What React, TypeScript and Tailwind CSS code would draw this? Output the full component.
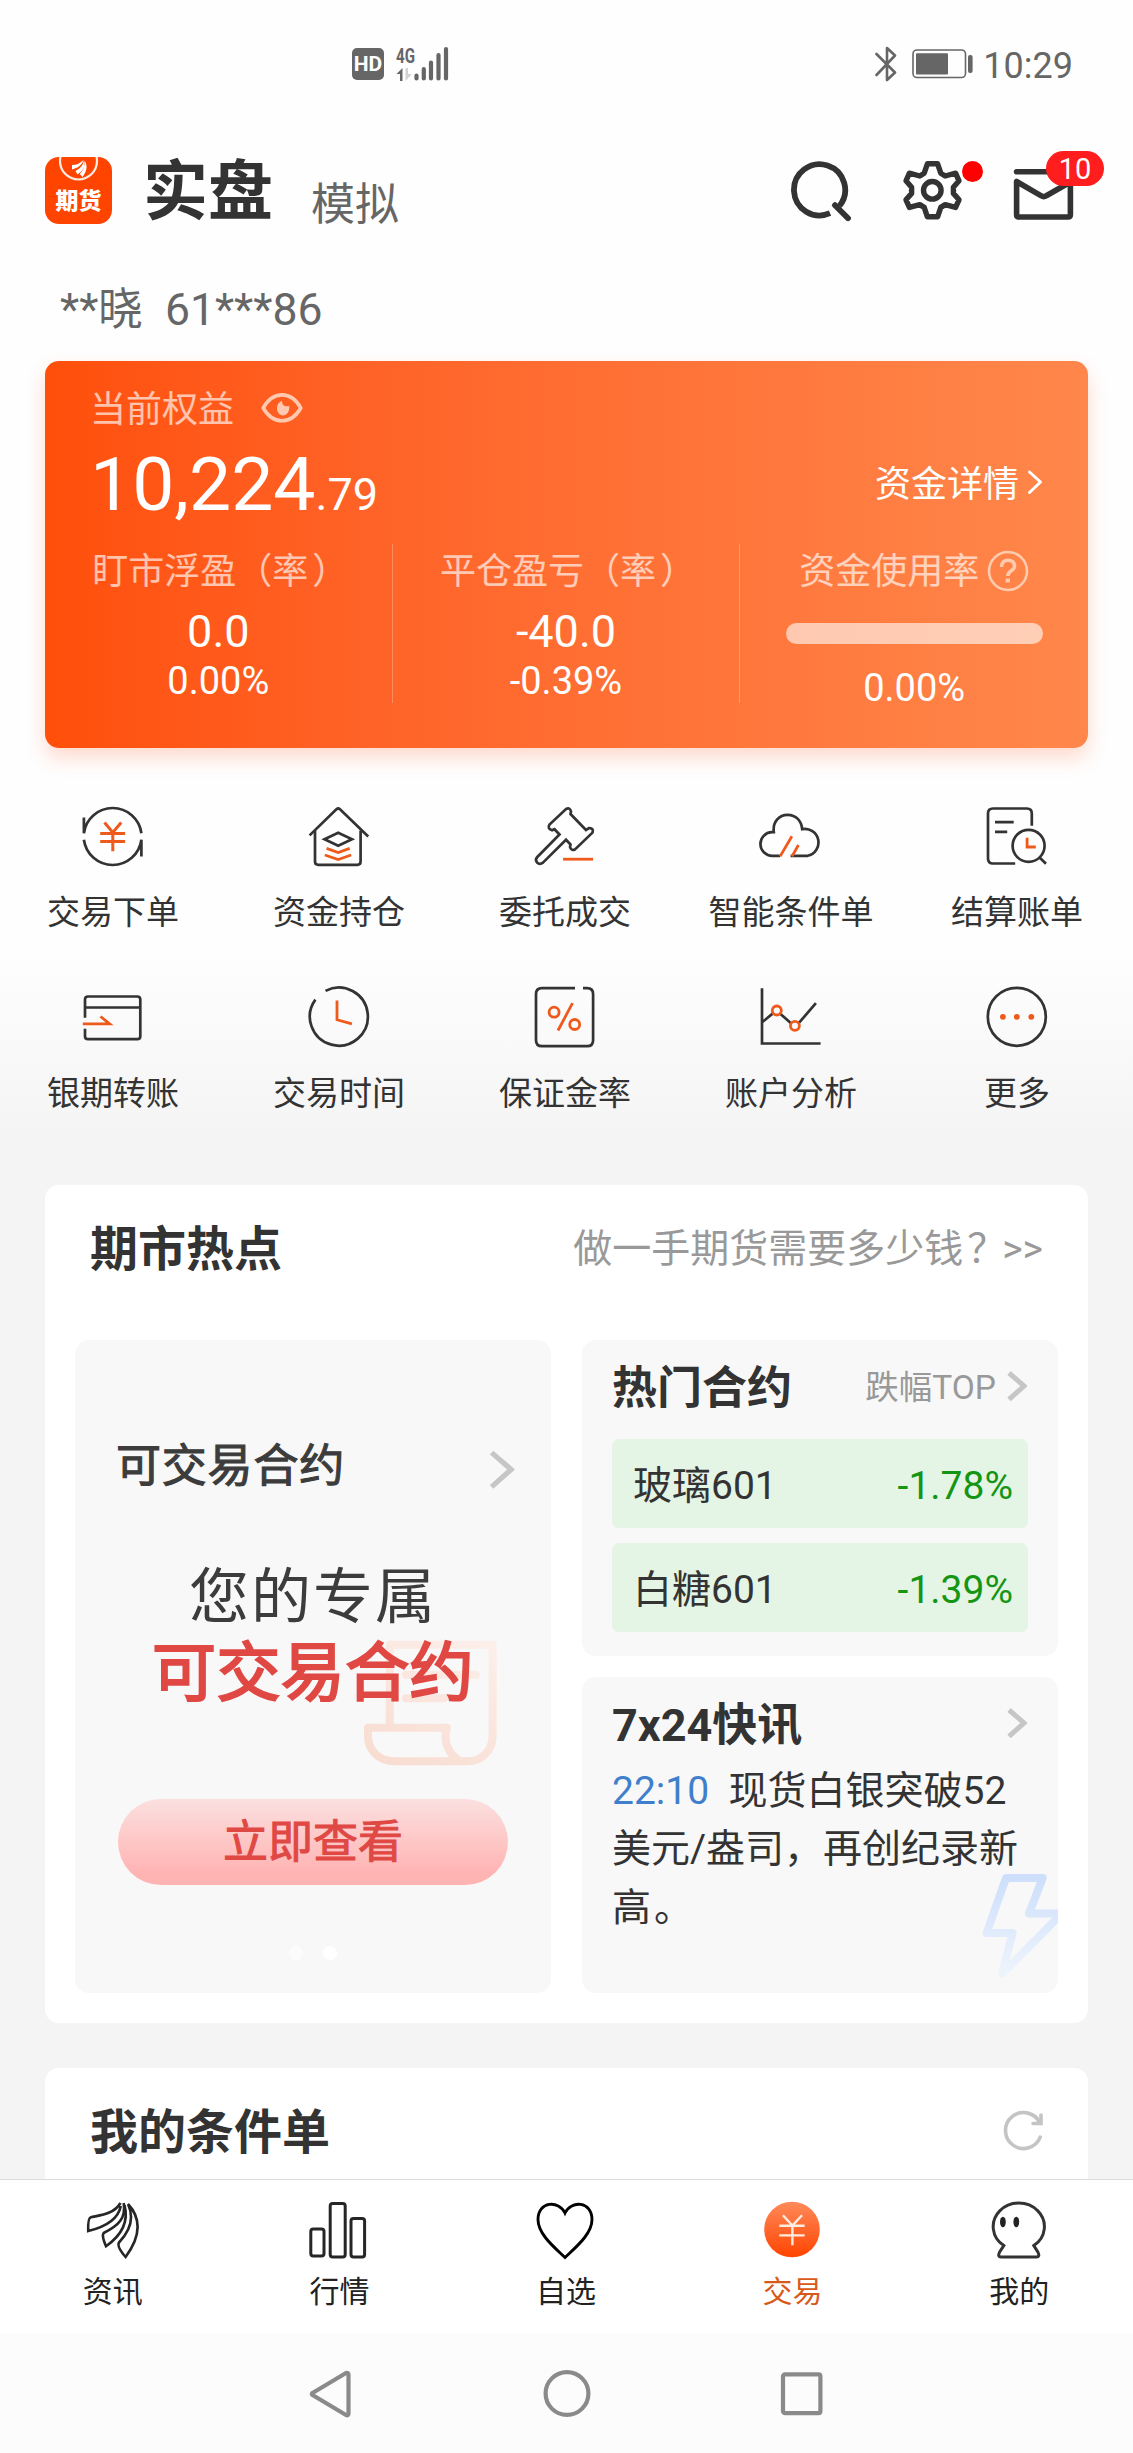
import React from "react";

const DARK = "#333333";
const ORANGE = "#ee5a1c";

/* ---------- status bar ---------- */

function SignalIcon() {
  return (
    <svg className="-mt-[6px] h-[42px] w-[54px]" viewBox="0 -6 54 42">
      <text x="0" y="16.5" fontFamily="Roboto" fontWeight="700" fontSize="20.5" fill="#666" textLength="19" lengthAdjust="spacingAndGlyphs">4G</text>
      <path d="M0.5 28 L6.5 22 V35 H4 V28Z" fill="#666" />
      <path d="M9.5 22 V35 L16 28 H12 V22Z" fill="#d2d2d2" />
      <g stroke="#666" strokeWidth="4.2" strokeLinecap="round">
        <path d="M20.5 29.5V32.5M27.8 23V32.5M35 16.5V32.5M42.5 9V32.5M50 3V32.5" />
      </g>
    </svg>
  );
}

function StatusBar() {
  return (
    <div className="flex h-[128px] shrink-0 items-center pl-[352px] pr-[60px]">
      <div className="flex h-[32px] w-[32px] items-center justify-center rounded-[5px] bg-[#666] text-[21px] font-bold leading-none text-white">
        HD
      </div>
      <div className="ml-[12px]">
        <SignalIcon />
      </div>
      <div className="ml-auto flex items-center">
        <svg className="h-[36px] w-[22px]" viewBox="0 0 22 36" fill="none" stroke="#666" strokeWidth="2.6" strokeLinejoin="round" strokeLinecap="round">
          <path d="M1.5 8 L20 26.5 L12 34 V2 L20 9.5 L1.5 29" />
        </svg>
        <svg className="ml-[15px] h-[30px] w-[62px]" viewBox="0 0 62 30">
          <rect x="1" y="1" width="52.5" height="27.5" rx="4" fill="none" stroke="#666" strokeWidth="1.6" />
          <rect x="4" y="4.2" width="32" height="21.3" rx="1" fill="#666" />
          <rect x="56" y="6" width="4.6" height="18" rx="2" fill="#666" />
        </svg>
        <div className="ml-[9px] mt-[3px] text-[36px] leading-[44px] text-[#666]">10:29</div>
      </div>
    </div>
  );
}

/* ---------- header ---------- */

function Logo() {
  return (
    <div className="relative flex h-[67px] w-[67px] shrink-0 justify-center overflow-hidden rounded-[14px] bg-[#ff4400]">
      <svg className="absolute left-0 top-0 h-[67px] w-[67px]" viewBox="0 0 67 67">
        <circle cx="33.5" cy="4" r="18.5" fill="none" stroke="#ffece3" strokeWidth="2.2" />
        <g fill="#fff">
          <path d="M27 8 C32 8 35 6 38.5 3 C37 8 33 11 27 12.5Z" />
          <path d="M30.5 14 C36 11 38 8 39 3.5 C41 9 38 14 32.5 17.5Z" />
          <path d="M34.8 17 C38.5 13 40 9 39.8 4 C43 9 41.5 15 37.5 20Z" />
        </g>
      </svg>
      <div className="mt-[31px] text-[23px] font-black leading-[28px] text-white">期货</div>
    </div>
  );
}

function Header() {
  return (
    <div className="flex h-[124px] shrink-0 items-center pl-[45px] pr-[29px]">
      <Logo />
      <div className="ml-[31px] mt-[4px] text-[65px] font-bold leading-[80px] text-[#333]">实盘</div>
      <div className="ml-[38px] mt-[30px] text-[44px] leading-[54px] text-[#666]">模拟</div>
      <svg className="ml-auto h-[64px] w-[64px]" viewBox="0 0 64 64" fill="none" stroke={DARK} strokeWidth="5.8" strokeLinecap="butt">
        <path d="M43 55.2 A25.6 25.6 0 1 1 52.4 48" />
        <path d="M48 47.2 L61 60.2" strokeLinecap="round" />
      </svg>
      <div className="relative ml-[50px] h-[64px] w-[62px]">
        <svg className="h-[64px] w-[62px]" viewBox="0 0 62 64" fill="none" stroke={DARK} strokeWidth="5.4" strokeLinejoin="round">
          <path d="M26.4 5.8 H36.6 L39.8 15.2 L44.2 18 L54.6 15.2 L58 22.8 L52.4 29.2 V35.4 L58 41.8 L54.6 49.4 L44.2 46.6 L39.8 49.4 L36.6 58.8 H26.4 L23.2 49.4 L18.8 46.6 L8.4 49.4 L5 41.8 L10.6 35.4 V29.2 L5 22.8 L8.4 15.2 L18.8 18 L23.2 15.2 Z" />
          <circle cx="31.3" cy="32.3" r="8.8" />
        </svg>
        <div className="absolute left-[61px] top-[3px] h-[21px] w-[21px] rounded-full bg-[#ff0000]" />
      </div>
      <div className="relative ml-[49px] h-[64px] w-[92px]">
        <svg className="h-[64px] w-[66px]" viewBox="0 0 66 64" fill="none" stroke={DARK} strokeWidth="5.6" strokeLinejoin="round" strokeLinecap="round">
          <path d="M4.6 13.8 H58" />
          <path d="M4.6 23.5 V56.5 Q4.6 59 7 59 H56 Q58.4 59 58.4 56.5 V24 L34.3 37.8 Q31.8 39.6 29.3 37.8 Z" />
        </svg>
        <div className="absolute left-[34px] top-[-7px] flex h-[35px] w-[58px] items-center justify-center rounded-full bg-[#ff1d1d] pt-px text-[29px] leading-none text-white">
          10
        </div>
      </div>
    </div>
  );
}

/* ---------- equity card ---------- */

function EquityCard() {
  return (
    <div className="mx-[45px] flex h-[387px] shrink-0 flex-col rounded-[14px] bg-linear-to-r from-[#ff4f09] to-[#ff874b] text-white shadow-[0_10px_20px_rgba(255,90,30,0.22)]">
      <div className="flex h-[44px] items-center pl-[45px] mt-[27px]">
        <div className="text-[36px] leading-[44px] text-white/65">当前权益</div>
        <svg className="ml-[26px] h-[32px] w-[44px] -mt-[4px]" viewBox="0 0 44 32">
          <path d="M3.2 16 C13 -1.5 31 -1.5 40.8 16 C31 33 13 33 3.2 16Z" fill="none" stroke="#ffc9b0" strokeWidth="3.6" strokeLinejoin="round" />
          <path d="M22 9 C22 13.5 25 15 29.3 14 C29.6 20 26.5 23.5 23 23.5 C15.5 23 15 11 22 9Z" fill="#ffc9b0" />
        </svg>
      </div>
      <div className="flex h-[94px] items-center justify-between pl-[45px] pr-[45px]">
        <div className="mt-[21px] flex items-baseline leading-[90px]">
          <span className="text-[75px]">10,224</span>
          <span className="text-[45px]">.79</span>
        </div>
        <div className="mt-[11px] flex items-center">
          <span className="text-[36px] leading-[44px]">资金详情</span>
          <svg className="ml-[8px] h-[26px] w-[16px] -mt-[5px]" viewBox="0 0 16 26" fill="none" stroke="#fff" strokeWidth="3" strokeLinecap="round" strokeLinejoin="round">
            <path d="M2.5 3 L13.5 13 L2.5 23.5" />
          </svg>
        </div>
      </div>
      <div className="mt-[18px] grid h-[159px] grid-cols-3 grid-rows-[159px] text-center">
        <Metric label="盯市浮盈" value="0.0" rate="0.00%" />
        <Metric label="平仓盈亏" value="-40.0" rate="-0.39%" />
        <div className="flex flex-col items-center">
          <div className="mt-[6px] flex items-center">
            <span className="text-[36px] leading-[44px] text-white/65">资金使用率</span>
            <svg className="ml-[8px] h-[42px] w-[42px] -mt-[3px]" viewBox="0 0 42 42" fill="none" stroke="#ffcbaf">
              <circle cx="21" cy="21" r="19" strokeWidth="2.6" />
              <path d="M14.5 17 C14 8 28 8 27.5 16.5 C27.3 21 21 20 20.8 26" strokeWidth="3.6" />
              <path d="M20.8 28.6 V32.4" strokeWidth="4.4" />
            </svg>
          </div>
          <div className="mt-[29px] h-[21px] w-[257px] shrink-0 rounded-full bg-white/60" />
          <div className="mt-[21px] text-[38px] leading-[46px]">0.00%</div>
        </div>
      </div>
    </div>
  );
}

function Metric({ label, value, rate }: { label: string; value: string; rate: string }) {
  return (
    <div className="flex flex-col items-center border-r border-white/25">
      <div className="mt-[6px] flex whitespace-nowrap text-[36px] leading-[44px] text-white/65">
        <span>{label}（率</span>
        <span className="-mr-[4px] pl-[4px]">）</span>
      </div>
      <div className="mt-[11px] text-[45px] leading-[54px]">{value}</div>
      <div className="-mt-[1px] text-[38px] leading-[46px]">{rate}</div>
    </div>
  );
}

/* ---------- shortcuts ---------- */

const O = ({ d, w = 2.8 }: { d: string; w?: number }) => <path d={d} stroke={ORANGE} strokeWidth={w} />;

const shortcuts: { label: string; icon: React.ReactNode }[] = [
  {
    label: "交易下单",
    icon: (
      <>
        <path d="M10.9 21.5 V37.2 A29 29 0 0 1 68.4 37.2" />
        <path d="M10.9 43.8 A29 29 0 0 0 68.4 43.8 V60.5" />
        <O d="M31.5 26.5 L39.8 36.5 L48.2 26.5 M39.8 36.5 V55.2 M27.2 37.4 H52.1 M27.2 45.6 H52.1" w={3} />
      </>
    ),
  },
  {
    label: "资金持仓",
    icon: (
      <>
        <path d="M10.6 39.4 L37.4 13.2 Q39.2 11.8 41 13.2 L69.2 40.5" />
        <path d="M16 34.5 V65.5 Q16 68.8 19.3 68.8 H58.3 Q61.6 68.8 61.6 65.5 V34.5" />
        <path d="M25.5 43.2 L39.2 36.8 L53 43.2 L39.2 49.8Z" />
        <O d="M27.6 52.4 L39.2 56.6 L50.7 52.4 M25.8 59 L39.2 63.6 L52.2 59" />
      </>
    ),
  },
  {
    label: "委托成交",
    icon: (
      <>
        <path d="M34.5 38.5 L29.5 33.2 L27 34.3 Q22 32.5 24.5 28.5 L41 13 Q45 11 46 15.5 L45.5 18 L61 34 L64 32.2 Q69 32 67.5 36.6 L50 53.4 Q46 55 45 51 L45.5 48.5 L41 43.8 L18 66.6 Q14.8 69 12 66.5 Q9.8 63.6 12.3 61Z" />
        <O d="M38.1 63.2 H68.1" />
      </>
    ),
  },
  {
    label: "智能条件单",
    icon: (
      <>
        <path d="M29 59.8 H21.5 A11.8 11.8 0 0 1 21 36.2 L22.8 36.2 C21.5 26 28 18.8 36.7 18.8 C45 18.8 50.5 25 51.2 33.2 A13.4 13.4 0 1 1 56.6 59.8 H39.6" />
        <O d="M29.1 60.4 L40.9 40.2 M41 60.4 L47.5 49" />
      </>
    ),
  },
  {
    label: "结算账单",
    icon: (
      <>
        <path d="M54.8 29.8 V17.5 Q54.8 12.5 49.8 12.5 H16 Q11 12.5 11 17.5 V62.5 Q11 67.5 16 67.5 H38.2" />
        <path d="M18 26.2 H36.7 M18 35.8 H30.2 M62.8 61.8 L69 67.8" />
        <circle cx="51.6" cy="49.8" r="16" />
        <O d="M50.1 41.8 V51 H58.8" />
      </>
    ),
  },
  {
    label: "银期转账",
    icon: (
      <>
        <path d="M12 40.8 V22.5 Q12 19.5 15 19.5 H64.3 Q67.3 19.5 67.3 22.5 V59.2 Q67.3 62.2 64.3 62.2 H15 Q12 62.2 12 59.2 V51.8 M12 30.5 H67.3" />
        <O d="M9.8 46.8 H36.6 L27.5 39.5" />
      </>
    ),
  },
  {
    label: "交易时间",
    icon: (
      <>
        <path d="M26.5 13.9 A29 29 0 1 1 16.4 22.6" />
        <O d="M38 23.5 V42.8 L52.9 46.8" />
      </>
    ),
  },
  {
    label: "保证金率",
    icon: (
      <>
        <path d="M50 11.2 H17 Q11 11.2 11 17.2 V63.2 Q11 69.2 17 69.2 H62.1 Q68.1 69.2 68.1 63.2 V17.2 Q68.1 11.2 62.1 11.2 H58" />
        <O d="M33 53.5 L47.5 26.2" />
        <circle cx="29.1" cy="35.2" r="5" stroke={ORANGE} strokeWidth="2.8" />
        <circle cx="49.7" cy="47.5" r="5" stroke={ORANGE} strokeWidth="2.8" />
      </>
    ),
  },
  {
    label: "账户分析",
    icon: (
      <>
        <path d="M11 11.2 V66.5 H69.6 M11.7 44.8 L21.9 36.4 M29.5 37 L40.3 46.4 M47.5 46.4 L64.9 26.2" />
        <circle cx="25.8" cy="33.5" r="4.5" stroke={ORANGE} strokeWidth="2.8" />
        <circle cx="43.9" cy="48.8" r="4.5" stroke={ORANGE} strokeWidth="2.8" />
      </>
    ),
  },
  {
    label: "更多",
    icon: (
      <>
        <circle cx="39.8" cy="39.8" r="29" />
        <g fill={ORANGE} stroke="none">
          <circle cx="25.9" cy="39.8" r="2.9" />
          <circle cx="39.8" cy="39.8" r="2.9" />
          <circle cx="54.3" cy="39.8" r="2.9" />
        </g>
      </>
    ),
  },
];

function Shortcuts() {
  return (
    <div className="mt-[47px] grid w-[1130px] shrink-0 grid-cols-5 gap-y-[41px]">
      {shortcuts.map((s) => (
        <div key={s.label} className="flex h-[140px] flex-col items-center">
          <svg className="mt-px h-[80px] w-[80px]" viewBox="0 0 80 80" fill="none" stroke={DARK} strokeWidth="2.7">
            {s.icon}
          </svg>
          <div className="mt-[15px] text-[33px] leading-[44px] text-[#333]">{s.label}</div>
        </div>
      ))}
    </div>
  );
}

/* ---------- hot spots ---------- */

function Chevron({ className, w = 5 }: { className: string; w?: number }) {
  return (
    <svg className={className} viewBox="0 0 20 30" fill="none" stroke="#c6c6c6" strokeWidth={w}>
      <path d="M2 2 L17 15 L2 28.4" />
    </svg>
  );
}

function TradablePanel() {
  return (
    <div className="relative flex w-[476px] flex-col items-center rounded-[14px] bg-[#f8f8f8]">
      <svg className="absolute left-[285px] top-[297px] h-[132px] w-[140px]" viewBox="0 0 140 132" fill="none" stroke="url(#scroll)" strokeWidth="8" strokeLinejoin="round" strokeLinecap="round">
        <defs>
          <linearGradient id="scroll" gradientUnits="userSpaceOnUse" x1="110" y1="0" x2="40" y2="130">
            <stop offset="0" stopColor="#fceee9" />
            <stop offset="1" stopColor="#f8ddd2" />
          </linearGradient>
        </defs>
        <path d="M29.8 90 V7.7 H132.6 V99 C132.6 114 121 124.3 107 124.3 H34 C19 124.3 8 113 8 99 V90.7 H87 C84 100 85 113 97 122" />
        <path d="M46 37.7 H116 M46 61.2 H84" />
      </svg>
      <div className="relative mt-[99px] flex w-full items-center justify-between pl-[41px] pr-[36px]">
        <div className="text-[45px] leading-[56px] tracking-[0.8px] text-[#3c3c3c] [-webkit-text-stroke:1.1px_#3c3c3c]">可交易合约</div>
        <Chevron className="mt-[4px] h-[39px] w-[26px]" w={4} />
      </div>
      <div className="relative mt-[65px] text-[60px] leading-[76px] tracking-[2px] text-[#3c3c3c]">您的专属</div>
      <div className="relative text-[64px] leading-[76px] tracking-[0.4px] text-[#e04844] [-webkit-text-stroke:2.2px_#e04844]">可交易合约</div>
      <div className="mt-[87px] flex h-[86px] w-[390px] items-center justify-center rounded-full bg-linear-to-b from-[#fae0df] to-[#ffb4b4] to-85% text-[45px] leading-none text-[#e04844] [-webkit-text-stroke:1px_#e04844]">
        立即查看
      </div>
      <div className="mt-[61px] flex gap-[20px]">
        <div className="h-[14px] w-[14px] rounded-full bg-white/60" />
        <div className="h-[14px] w-[14px] rounded-full bg-white" />
      </div>
    </div>
  );
}

function ContractRow({ name, change }: { name: string; change: string }) {
  return (
    <div className="flex h-[89px] items-center justify-between rounded-[7px] bg-[#e4f4e5] pl-[21px] pr-[15px] pt-[6px] text-[39px]">
      <span className="text-[#333]">{name}</span>
      <span className="text-[#149614]">{change}</span>
    </div>
  );
}

function HotContracts() {
  return (
    <div className="flex h-[316px] flex-col rounded-[14px] bg-[#f8f8f8] px-[30px]">
      <div className="flex h-[99px] items-center">
        <div className="-mt-[2px] text-[45px] font-bold leading-[56px] text-[#333]">热门合约</div>
        <div className="-mt-[3px] ml-auto text-[33.5px] leading-[44px] text-[#999]">跌幅TOP</div>
        <Chevron className="ml-[11px] mr-[1px] mt-[-8px] h-[30px] w-[20px]" />
      </div>
      <div className="flex flex-col gap-[15px]">
        <ContractRow name="玻璃601" change="-1.78%" />
        <ContractRow name="白糖601" change="-1.39%" />
      </div>
    </div>
  );
}

function NewsPanel() {
  return (
    <div className="relative flex h-[316px] flex-col overflow-hidden rounded-[14px] bg-[#f8f8f8] px-[30px]">
      <svg className="absolute right-0 top-[193px] h-[112px] w-[80px]" viewBox="0 0 80 112" fill="none" stroke="url(#bolt)" strokeWidth="8" strokeLinejoin="round">
        <defs>
          <linearGradient id="bolt" x1="0" y1="0" x2="0" y2="1">
            <stop offset="0" stopColor="#cddffb" />
            <stop offset="1" stopColor="#eef4fc" />
          </linearGradient>
        </defs>
        <path d="M28 8 H64.7 L51 43.5 H84 L24 104 L34.6 63 H8.6 Z" />
      </svg>
      <div className="mt-[19px] flex h-[60px] items-center justify-between">
        <div className="text-[45px] font-bold leading-[56px] text-[#333]">7x24快讯</div>
        <Chevron className="mr-[1px] mt-[-7px] h-[30px] w-[20px]" />
      </div>
      <div className="relative mt-[6px] text-[39px] leading-[58.3px] text-[#333]">
        <span className="text-[#3f7fcc]">22:10</span>
        <span className="whitespace-pre">{"  "}现货白银突破52</span>
        <br />
        美元/盎司，再创纪录新
        <br />
        高<span className="pl-[3px]">。</span>
      </div>
    </div>
  );
}

function HotSpots() {
  return (
    <div className="mx-[45px] mt-[69px] flex h-[838px] shrink-0 flex-col rounded-[14px] bg-white">
      <div className="mb-[24px] flex h-[131px] items-center justify-between px-[45px]">
        <div className="-mt-px text-[48px] font-bold leading-[60px] text-[#333]">期市热点</div>
        <div className="-mt-[4px] text-[39px] leading-[50px] text-[#999]">
          做一手期货需要多少钱<span className="-mr-[4px] pl-[4px]">？</span>&gt;&gt;
        </div>
      </div>
      <div className="flex h-[653px] justify-between px-[30px]">
        <TradablePanel />
        <div className="flex w-[476px] flex-col gap-[21px]">
          <HotContracts />
          <NewsPanel />
        </div>
      </div>
    </div>
  );
}

function ConditionOrders() {
  return (
    <div className="mx-[45px] mt-[45px] flex h-[111px] shrink-0 items-center justify-between rounded-t-[14px] bg-white px-[45px] pt-[19px]">
      <div className="text-[48px] font-bold leading-[60px] text-[#333]">我的条件单</div>
      <svg className="-mt-[6px] h-[42px] w-[41px]" viewBox="0 0 41 42" fill="none" stroke="#c4c4c4" strokeWidth="3.6" strokeLinecap="round">
        <path d="M38.2 28.2 A18 18 0 1 1 37.6 13.5" />
        <path d="M39 6 V14.5 H31" strokeWidth="3.6" />
      </svg>
    </div>
  );
}

/* ---------- bottom bars ---------- */

const tabs: { label: string; active?: boolean; icon: React.ReactNode }[] = [
  {
    label: "资讯",
    icon: (
      <g strokeWidth="2.6">
        <path d="M39.5 5 C33 16 20 17 9.8 19.3 Q6.8 20 7.2 33 C22 29.5 37 22 39.8 8" />
        <path d="M42.7 5 C45 20 38 27.5 22.6 35 Q20.5 38 25 48.2 C41 37 48 24 43.5 7" />
        <path d="M47 6 C60 20 60 38 44.6 59 Q35.5 48.5 38 44.5 C49 33 53.5 20 47 6" />
      </g>
    ),
  },
  {
    label: "行情",
    icon: (
      <g strokeWidth="3">
        <rect x="3.8" y="31" width="13.2" height="27" rx="2.5" />
        <rect x="23.2" y="5.4" width="15" height="53.6" rx="2.5" />
        <rect x="44" y="20.6" width="13.6" height="38.4" rx="2.5" />
      </g>
    ),
  },
  {
    label: "自选",
    icon: (
      <path stroke="#000" strokeWidth="2.9" d="M31 15 C25 2 4 3 4 21.5 C4 36 20 49 31 59.5 C42 49 58 36 58 21.5 C58 3 37 2 31 15Z" />
    ),
  },
  {
    label: "交易",
    active: true,
    icon: (
      <>
        <defs>
          <linearGradient id="trade" x1="0" y1="0" x2="0" y2="1">
            <stop offset="0" stopColor="#ff8a5a" />
            <stop offset="1" stopColor="#ff4400" />
          </linearGradient>
        </defs>
        <circle cx="31" cy="31.5" r="27.8" fill="url(#trade)" stroke="none" />
        <path stroke="#ffece0" strokeWidth="2.4" d="M21.9 17.2 L31.4 27.5 L41 17.2 M31.4 27.5 V47.2 M18.3 27.8 H43.6 M18.3 37.4 H43.6" />
      </>
    ),
  },
  {
    label: "我的",
    icon: (
      <>
        <path stroke={DARK} strokeWidth="3" d="M16.8 47.6 A25.6 23.5 0 1 1 46.8 47.6 L51 54.3 Q53.2 59 49.5 59 H14 Q10.3 59 12.5 54.3 Z" />
        <g fill="#222" stroke="none">
          <ellipse cx="15.9" cy="24" rx="2.9" ry="5.2" />
          <ellipse cx="29.3" cy="24" rx="2.9" ry="5.2" />
        </g>
      </>
    ),
  },
];

function TabBar() {
  return (
    <div className="grid h-[155px] shrink-0 grid-cols-5 border-t border-[#dcdcdc] bg-white">
      {tabs.map((t) => (
        <div key={t.label} className="flex flex-col items-center pt-[18px] pr-px">
          <svg className="h-[64px] w-[64px]" viewBox="0 0 64 64" fill="none" stroke="#262626">
            {t.icon}
          </svg>
          <div className={t.active ? "mt-[11px] text-[30px] leading-[38px] text-[#d85a1b]" : "mt-[11px] text-[30px] leading-[38px] text-[#222]"}>
            {t.label}
          </div>
        </div>
      ))}
    </div>
  );
}

function SystemNav() {
  return (
    <div className="flex h-[119px] shrink-0 items-center justify-center gap-[186px] bg-[#fcfcfc]">
      <svg className="h-[50px] w-[50px]" viewBox="0 0 50 50" fill="none" stroke="#8a8a8a" strokeWidth="4.2" strokeLinejoin="round">
        <path d="M6 25.5 Q5.5 24.5 6.5 24 L40 4 Q42.3 3.5 42.5 5.5 V44.5 Q42.3 47 40 46 L6.5 26Z" />
      </svg>
      <svg className="h-[50px] w-[50px]" viewBox="0 0 50 50" fill="none" stroke="#8a8a8a" strokeWidth="4.2">
        <circle cx="25" cy="24.5" r="21.4" />
      </svg>
      <svg className="h-[50px] w-[50px]" viewBox="0 0 50 50" fill="none" stroke="#8a8a8a" strokeWidth="4.2">
        <rect x="5" y="5.4" width="37.4" height="38.8" rx="2" />
      </svg>
    </div>
  );
}

export default function App() {
  return (
    <div
      lang="zh-CN"
      className="flex h-[2453px] w-[1133px] flex-col overflow-hidden bg-[#f4f4f4] font-['Roboto','Noto_Sans_CJK_SC',sans-serif]"
    >
      <div className="flex h-[2179px] shrink-0 flex-col overflow-hidden bg-[linear-gradient(to_bottom,#fefefe_0px,#fefefe_950px,#f4f4f4_1145px)]">
        <StatusBar />
        <Header />
        <div className="flex h-[109px] shrink-0 items-center whitespace-pre pl-[60px] pt-[6px] text-[44.5px] leading-[56px] text-[#666]">
          {"**晓  61***86"}
        </div>
        <EquityCard />
        <Shortcuts />
        <HotSpots />
        <ConditionOrders />
      </div>
      <TabBar />
      <SystemNav />
    </div>
  );
}
